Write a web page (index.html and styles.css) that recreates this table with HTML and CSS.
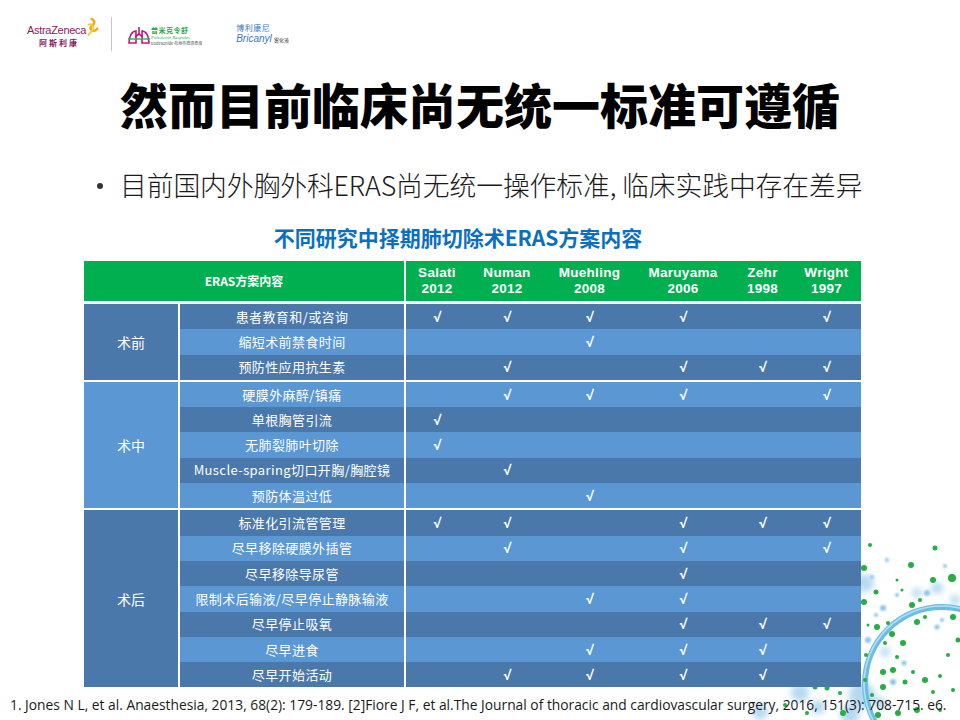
FILE: index.html
```html
<!DOCTYPE html>
<html lang="zh-CN">
<head>
<meta charset="utf-8">
<title>ERAS</title>
<link rel="stylesheet" href="styles.css">
</head>
<body>
<div class="slide">
  <svg class="deco" width="260" height="200" viewBox="700 520 260 200" xmlns="http://www.w3.org/2000/svg">
    <defs>
      <filter id="blur" x="-50%" y="-50%" width="200%" height="200%"><feGaussianBlur stdDeviation="1.2"/></filter>
      <filter id="blur2" x="-50%" y="-50%" width="200%" height="200%"><feGaussianBlur stdDeviation="3"/></filter>
    </defs>
    <g fill="#a9d3ee" filter="url(#blur2)" opacity="0.85">
      <circle cx="865" cy="583" r="9"/>
      <circle cx="862" cy="695" r="13"/>
      <circle cx="800" cy="693" r="9"/>
      <circle cx="818" cy="707" r="7"/>
      <circle cx="850" cy="714" r="10"/>
      <circle cx="880" cy="703" r="6"/>
      <circle cx="917" cy="593" r="5"/>
      <circle cx="885" cy="652" r="5"/>
      <circle cx="760" cy="712" r="8"/>
      <circle cx="955" cy="600" r="5"/>
      <circle cx="937" cy="588" r="6"/>
    </g>
    <g fill="#8cc4ea" filter="url(#blur)">
      <circle cx="883" cy="608" r="3"/>
      <circle cx="872" cy="577" r="2"/>
      <circle cx="897" cy="595" r="2"/>
      <circle cx="927" cy="593" r="3"/>
      <circle cx="942" cy="620" r="2"/>
      <circle cx="937" cy="627" r="2.5"/>
      <circle cx="893" cy="682" r="3"/>
      <circle cx="887" cy="560" r="2"/>
      <circle cx="945" cy="566" r="2"/>
      <circle cx="904" cy="663" r="2.5"/>
      <circle cx="868" cy="640" r="3"/>
      <circle cx="876" cy="615" r="2"/>
      <circle cx="900" cy="620" r="2"/>
    </g>
    <circle cx="942" cy="684" r="77" fill="none" stroke="#6cbde2" stroke-width="6"/>
    <circle cx="942" cy="684" r="78" fill="none" stroke="#b4dff2" stroke-width="1.6"/>
    <g fill="#27ad45">
      <circle cx="864" cy="568" r="3"/>
      <circle cx="911" cy="565" r="3"/>
      <circle cx="933" cy="580" r="3"/>
      <circle cx="952" cy="578" r="4"/>
      <circle cx="897" cy="580" r="1.5"/>
      <circle cx="876" cy="592" r="2.5"/>
      <circle cx="902" cy="590" r="1.5"/>
      <circle cx="920" cy="600" r="2"/>
      <circle cx="912" cy="605" r="3"/>
      <circle cx="864" cy="602" r="3"/>
      <circle cx="877" cy="627" r="3"/>
      <circle cx="888" cy="623" r="2"/>
      <circle cx="917" cy="622" r="3"/>
      <circle cx="925" cy="617" r="2"/>
      <circle cx="953" cy="617" r="3"/>
      <circle cx="892" cy="634" r="3"/>
      <circle cx="885" cy="643" r="2"/>
      <circle cx="903" cy="643" r="3"/>
      <circle cx="897" cy="657" r="2"/>
      <circle cx="883" cy="672" r="3"/>
      <circle cx="893" cy="670" r="3"/>
      <circle cx="905" cy="682" r="2.5"/>
      <circle cx="913" cy="672" r="2"/>
      <circle cx="925" cy="680" r="3"/>
      <circle cx="940" cy="676" r="2"/>
      <circle cx="933" cy="692" r="2"/>
      <circle cx="953" cy="690" r="2"/>
      <circle cx="883" cy="687" r="3"/>
      <circle cx="872" cy="695" r="2"/>
      <circle cx="878" cy="715" r="3"/>
      <circle cx="898" cy="713" r="3"/>
      <circle cx="917" cy="710" r="3"/>
      <circle cx="940" cy="710" r="2"/>
      <circle cx="865" cy="680" r="2"/>
      <circle cx="815" cy="687" r="2.5"/>
      <circle cx="827" cy="688" r="2.5"/>
      <circle cx="840" cy="693" r="2"/>
      <circle cx="843" cy="713" r="3"/>
      <circle cx="807" cy="713" r="2"/>
      <circle cx="785" cy="705" r="2"/>
      <circle cx="958" cy="640" r="2.5"/>
      <circle cx="948" cy="655" r="2"/>
      <circle cx="870" cy="545" r="2"/>
      <circle cx="935" cy="548" r="2.5"/>
      <circle cx="866" cy="655" r="2"/>
      <circle cx="868" cy="625" r="1.5"/>
    </g>
  </svg>

  <div class="content">
    <header class="logos">
      <div class="az">
        <div class="az-top">
          <span class="az-name">AstraZeneca</span>
          <svg class="az-mark" width="16" height="22" viewBox="0 0 16 22" xmlns="http://www.w3.org/2000/svg">
            <path d="M7 1 C10 3 12 5 9 8 C7 10 4 11 6 14 C8 17 12 16 14 13" fill="none" stroke="#f2a900" stroke-width="3" stroke-linecap="round"/>
            <path d="M3 8 C6 7 10 9 9 13 C8 17 4 18 3 21" fill="none" stroke="#f7c948" stroke-width="2.4" stroke-linecap="round"/>
          </svg>
        </div>
        <span class="az-cn">阿斯利康</span>
      </div>
      <div class="divider"></div>
      <div class="pulmi">
        <svg class="lung" width="22" height="20" viewBox="0 0 22 20" xmlns="http://www.w3.org/2000/svg">
          <path d="M11 1 V8 M11 8 L7 11 M11 8 L15 11" fill="none" stroke="#c2187c" stroke-width="1.6"/>
          <path d="M8 5 C4 5 1 10 1 17 L8 17 Z M14 5 C18 5 21 10 21 17 L14 17 Z" fill="none" stroke="#c2187c" stroke-width="1.6"/>
          <path d="M0 13 H22" stroke="#2bb24c" stroke-width="1.4"/>
        </svg>
        <div class="pulmi-txt">
          <span class="pm-cn">普米克令舒</span>
          <span class="pm-en">Pulmicort Respules</span>
          <span class="pm-sm">Budesonide 布地奈德混悬液</span>
        </div>
      </div>
      <div class="bric">
        <span class="br-cn">博利康尼</span>
        <span class="br-en">Bricanyl<span class="br-sm">雾化液</span></span>
      </div>
    </header>

    <h1 class="title">然而目前临床尚无统一标准可遵循</h1>

    <ul class="bullets">
      <li>目前国内外胸外科ERAS尚无统一操作标准, 临床实践中存在差异</li>
    </ul>

    <h2 class="caption">不同研究中择期肺切除术ERAS方案内容</h2>

    <table class="eras">
      <colgroup>
        <col class="c-cat"><col class="c-item"><col class="c-s"><col class="c-n"><col class="c-m"><col class="c-ma"><col class="c-z"><col class="c-w">
      </colgroup>
      <thead>
        <tr>
          <th colspan="2" class="th-main">ERAS方案内容</th>
          <th><span class="hl">Salati</span><span class="hl">2012</span></th>
          <th><span class="hl">Numan</span><span class="hl">2012</span></th>
          <th><span class="hl">Muehling</span><span class="hl">2008</span></th>
          <th><span class="hl">Maruyama</span><span class="hl">2006</span></th>
          <th><span class="hl">Zehr</span><span class="hl">1998</span></th>
          <th><span class="hl">Wright</span><span class="hl">1997</span></th>
        </tr>
      </thead>
      <tbody>
        <tr class="dk grp-first">
          <td rowspan="3" class="cat cat-dk">术前</td>
          <td class="item">患者教育和/或咨询</td>
          <td>√</td><td>√</td><td>√</td><td>√</td><td></td><td>√</td>
        </tr>
        <tr class="lt">
          <td class="item">缩短术前禁食时间</td>
          <td></td><td></td><td>√</td><td></td><td></td><td></td>
        </tr>
        <tr class="dk">
          <td class="item">预防性应用抗生素</td>
          <td></td><td>√</td><td></td><td>√</td><td>√</td><td>√</td>
        </tr>
        <tr class="lt grp">
          <td rowspan="5" class="cat cat-lt">术中</td>
          <td class="item">硬膜外麻醉/镇痛</td>
          <td></td><td>√</td><td>√</td><td>√</td><td></td><td>√</td>
        </tr>
        <tr class="dk">
          <td class="item">单根胸管引流</td>
          <td>√</td><td></td><td></td><td></td><td></td><td></td>
        </tr>
        <tr class="lt">
          <td class="item">无肺裂肺叶切除</td>
          <td>√</td><td></td><td></td><td></td><td></td><td></td>
        </tr>
        <tr class="dk">
          <td class="item">Muscle-sparing切口开胸/胸腔镜</td>
          <td></td><td>√</td><td></td><td></td><td></td><td></td>
        </tr>
        <tr class="lt">
          <td class="item">预防体温过低</td>
          <td></td><td></td><td>√</td><td></td><td></td><td></td>
        </tr>
        <tr class="dk grp">
          <td rowspan="7" class="cat cat-dk">术后</td>
          <td class="item">标准化引流管管理</td>
          <td>√</td><td>√</td><td></td><td>√</td><td>√</td><td>√</td>
        </tr>
        <tr class="lt">
          <td class="item">尽早移除硬膜外插管</td>
          <td></td><td>√</td><td></td><td>√</td><td></td><td>√</td>
        </tr>
        <tr class="dk">
          <td class="item">尽早移除导尿管</td>
          <td></td><td></td><td></td><td>√</td><td></td><td></td>
        </tr>
        <tr class="lt">
          <td class="item">限制术后输液/尽早停止静脉输液</td>
          <td></td><td></td><td>√</td><td>√</td><td></td><td></td>
        </tr>
        <tr class="dk">
          <td class="item">尽早停止吸氧</td>
          <td></td><td></td><td></td><td>√</td><td>√</td><td>√</td>
        </tr>
        <tr class="lt">
          <td class="item">尽早进食</td>
          <td></td><td></td><td>√</td><td>√</td><td>√</td><td></td>
        </tr>
        <tr class="dk">
          <td class="item">尽早开始活动</td>
          <td></td><td>√</td><td>√</td><td>√</td><td>√</td><td></td>
        </tr>
      </tbody>
    </table>

    <p class="ref">1. Jones N L, et al. Anaesthesia, 2013, 68(2): 179-189. [2]Fiore J F, et al.The Journal of thoracic and cardiovascular surgery, 2016, 151(3): 708-715. e6.</p>
  </div>
</div>
</body>
</html>
```

FILE: styles.css
```css
html, body {
  margin: 0;
  padding: 0;
  background: #fff;
}

.slide {
  width: 960px;
  height: 720px;
  position: relative;
  overflow: hidden;
  background: #fff;
  font-family: "Noto Sans CJK SC", "Noto Sans", sans-serif;
  color: #111;
}

.deco {
  position: absolute;
  left: 700px;
  top: 520px;
  z-index: 0;
}

.content {
  position: relative;
  z-index: 1;
  display: flex;
  flex-direction: column;
}

/* ---------- logos ---------- */
.logos {
  height: 60px;
  box-sizing: border-box;
  padding: 16px 0 0 27px;
  display: flex;
  align-items: flex-start;
}

.az {
  display: flex;
  flex-direction: column;
  width: 72px;
}

.az-top {
  display: flex;
  align-items: flex-start;
  height: 22px;
}

.az-name {
  font-family: "Liberation Sans", Arial, sans-serif;
  font-size: 11px;
  letter-spacing: -0.3px;
  color: #8a1a5e;
  margin-top: 8px;
}

.az-cn {
  font-size: 8px;
  line-height: 9px;
  letter-spacing: 2px;
  color: #8a1a5e;
  margin-left: 12px;
  font-weight: 700;
}

.divider {
  width: 1px;
  height: 34px;
  background: #dcbccb;
  margin: 1px 16px 0 12px;
}

.pulmi {
  display: flex;
  align-items: center;
  margin-top: 10px;
  gap: 1px;
}

.pulmi-txt {
  display: flex;
  flex-direction: column;
  line-height: 1;
}

.pm-cn {
  font-size: 7px;
  font-weight: 700;
  color: #2aa84a;
  letter-spacing: 0.5px;
}

.pm-en {
  font-family: "Liberation Serif", serif;
  font-style: italic;
  font-size: 5px;
  color: #2aa84a;
  margin-top: 1px;
}

.pm-sm {
  font-size: 4px;
  color: #555;
  margin-top: 1px;
  white-space: nowrap;
}

.bric {
  display: flex;
  flex-direction: column;
  margin-left: 34px;
  margin-top: 8px;
  line-height: 1;
}

.br-cn {
  font-size: 8px;
  color: #3c78b8;
  letter-spacing: 0.5px;
}

.br-en {
  font-family: "Liberation Sans", Arial, sans-serif;
  font-style: italic;
  font-size: 10px;
  color: #3c78b8;
  margin-top: 2px;
}

.br-sm {
  font-style: normal;
  font-size: 5px;
  color: #333;
  margin-left: 2px;
}

/* ---------- headings ---------- */
.title {
  margin: 15px 0 0 0;
  text-align: center;
  font-size: 48px;
  line-height: 56px;
  font-weight: 900;
  color: #000;
}

.bullets {
  margin: 37px 0 0 0;
  padding: 0 0 0 120px;
  list-style: none;
}

.bullets li {
  position: relative;
  font-size: 26.8px;
  line-height: 34px;
  font-weight: 300;
  color: #1a1a1a;
  white-space: nowrap;
  letter-spacing: -0.1px;
}

.bullets li::before {
  content: "";
  position: absolute;
  left: -23px;
  top: 15px;
  width: 6px;
  height: 6px;
  border-radius: 50%;
  background: #333;
}

.caption {
  margin: 22px 0 0 0;
  text-align: center;
  width: 916px;
  font-size: 21px;
  line-height: 26px;
  font-weight: 700;
  color: #0b6fc1;
}

/* ---------- table ---------- */
.eras {
  margin: 11px 0 0 84px;
  width: 777px;
  border-collapse: collapse;
  table-layout: fixed;
  color: #fff;
}

.c-cat { width: 95px; }
.c-item { width: 226px; }
.c-s { width: 63px; }
.c-n { width: 78px; }
.c-m { width: 87px; }
.c-ma { width: 100px; }
.c-z { width: 59px; }
.c-w { width: 69px; }

.eras th {
  background: #00b050;
  height: 40px;
  padding: 0;
  font-family: "Noto Sans CJK SC", sans-serif;
  font-weight: 700;
  font-size: 12px;
  line-height: 16px;
  text-align: center;
  vertical-align: middle;
  border-bottom: 3px solid #fff;
}

.eras th .hl {
  display: block;
  font-family: "Liberation Sans", Arial, sans-serif;
  font-size: 13.5px;
  line-height: 16px;
  height: 16px;
  letter-spacing: 0.3px;
}

.eras th.th-main {
  border-right: 2px solid #fff;
}

.eras td {
  height: 25.3px;
  padding: 0;
  text-align: center;
  vertical-align: middle;
  font-family: "Open Sans", "Noto Sans CJK SC", sans-serif;
  font-size: 13px;
  line-height: 16px;
  font-weight: 700;
}

.eras tr.dk td { background: #4a78ab; }
.eras tr.lt td { background: #5a97d3; }

.eras td.item {
  font-family: "Noto Sans CJK SC", sans-serif;
  font-weight: 400;
  letter-spacing: 0.4px;
  border-right: 2px solid #fff;
  white-space: nowrap;
}

.eras tr td.cat {
  font-family: "Noto Sans CJK SC", sans-serif;
  font-weight: 400;
  font-size: 14px;
  border-right: 2px solid #fff;
}

.eras tr td.cat-dk { background: #4a78ab; }
.eras tr td.cat-lt { background: #5a97d3; }

.eras tr.grp td {
  border-top: 2px solid #fff;
}

/* ---------- reference ---------- */
.ref {
  margin: 9px 0 0 10px;
  font-family: "Open Sans", "Noto Sans CJK SC", sans-serif;
  font-size: 13.8px;
  line-height: 18px;
  color: #1a1a1a;
  white-space: nowrap;
}
```
